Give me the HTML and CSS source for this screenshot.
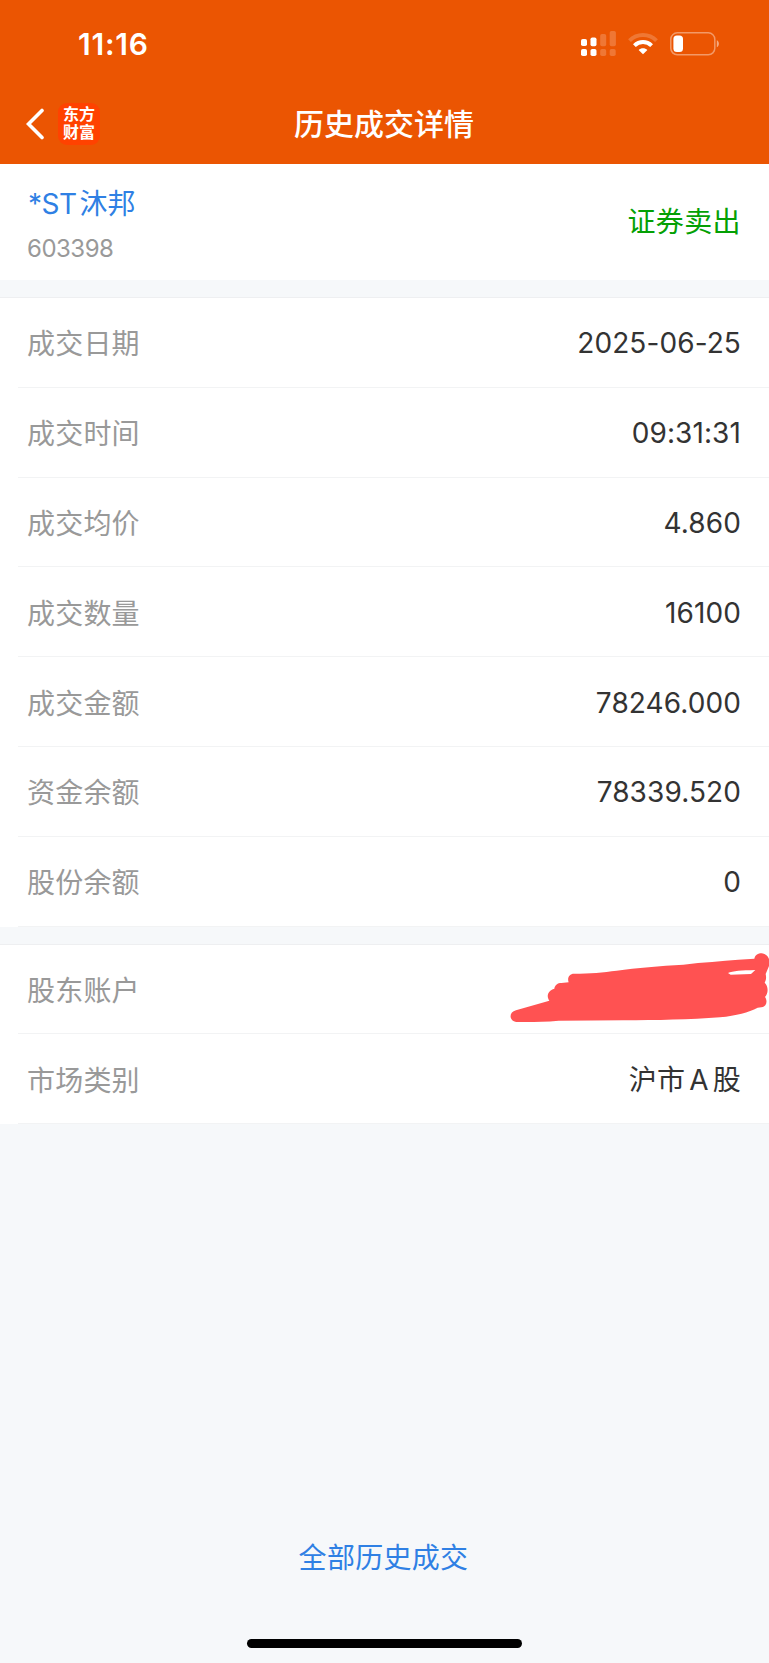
FILE: index.html
```
<!DOCTYPE html>
<html lang="zh-CN">
  <head>
    <meta charset="UTF-8" />
    <meta name="viewport" content="width=device-width, initial-scale=1.0" />
    <title>历史成交详情</title>
    <link rel="stylesheet" href="styles.css">
  </head>
  <body>
    <header class="header">
      <div class="status-bar">
        <span class="time">11:16</span>
        <div class="status-icons">
          <svg class="signal" viewBox="0 0 36 26" fill="#fff">
            <rect x="0" y="8" width="6" height="7" rx="1.8" />
            <rect x="9.5" y="6.5" width="6" height="8.7" rx="1.8" />
            <rect x="0" y="18" width="6" height="7" rx="1.8" />
            <rect x="9.5" y="18" width="6" height="7" rx="1.8" />
            <g opacity="0.2">
              <rect x="19.2" y="3" width="6" height="12.2" rx="1.8" />
              <rect x="28.7" y="0" width="6.2" height="15.2" rx="1.8" />
              <rect x="19.2" y="18" width="6" height="7" rx="1.8" />
              <rect x="28.7" y="18" width="6" height="7" rx="1.8" />
            </g>
          </svg>
          <svg class="wifi" viewBox="0 0 30 22" fill="none" stroke="#fff" stroke-width="4">
            <path d="M1.5 7.6C9 0.2 21 0.2 28.5 7.6" opacity="0.2" />
            <path d="M6.4 12.6C11.3 7.9 18.7 7.9 23.6 12.6" />
            <path d="M15 21.3L10.6 17C13 14.6 17 14.6 19.4 17Z" fill="#fff" stroke="none" />
          </svg>
          <svg class="battery" viewBox="0 0 50 24">
            <rect x="0.8" y="0.8" width="44" height="22" rx="6.5" fill="none" stroke="#fff" stroke-opacity="0.4" stroke-width="1.5" />
            <rect x="3.4" y="3.5" width="9.6" height="16.6" rx="3.5" fill="#fff" />
            <path d="M46.8 8.3C49.6 9.6 49.6 14 46.8 15.3Z" fill="#fff" fill-opacity="0.5" />
          </svg>
        </div>
      </div>
      <div class="nav-bar">
        <div class="nav-left">
          <svg class="back" viewBox="0 0 18 32">
            <path d="M16 2.5L2.5 16L16 29.5" fill="none" stroke="#fff" stroke-width="3.6" stroke-linecap="round" />
          </svg>
          <div class="logo">东方<br />财富</div>
        </div>
        <h1 class="title">历史成交详情</h1>
      </div>
    </header>

    <section class="summary">
      <div class="stock">
        <a class="stock-name" href="#"><span class="prefix">*ST</span>沐邦</a>
        <span class="stock-code">603398</span>
      </div>
      <span class="side">证券卖出</span>
    </section>

    <ul class="list">
      <li><span class="label">成交日期</span><span class="value">2025-06-25</span></li>
      <li><span class="label">成交时间</span><span class="value">09:31:31</span></li>
      <li><span class="label">成交均价</span><span class="value">4.860</span></li>
      <li><span class="label">成交数量</span><span class="value">16100</span></li>
      <li><span class="label">成交金额</span><span class="value">78246.000</span></li>
      <li><span class="label">资金余额</span><span class="value">78339.520</span></li>
      <li><span class="label">股份余额</span><span class="value">0</span></li>
    </ul>

    <ul class="list account">
      <li>
        <span class="label">股东账户</span>
        <svg class="scribble" viewBox="0 45 837 267">
          <path fill="#ff5252" fill-rule="evenodd" d="M78 241L178 212C168 198 174 181 193 176C195 165 203 159 214 159L236 157C231 143 238 131 252 131C300 131 340 127 380 122C440 113 510 108 580 104C640 96 695 94 745 89L793 86C796 74 804 70 815 70C827 71 833 78 837 87L837 108L827 132C829 142 829 150 824 158C835 168 836 190 825 201C834 214 829 231 814 232L803 233C775 247 740 257 690 262C600 269 500 271 400 271L206 272C160 276 120 277 80 276C56 273 56 246 78 241ZM714 129C728 123 755 121 796 120L783 132L722 134Z" />
        </svg>
      </li>
      <li><span class="label">市场类别</span><span class="value market">沪市<span class="latin">A</span>股</span></li>
    </ul>

    <footer class="footer">
      <a class="all-link" href="#">全部历史成交</a>
      <div class="home-indicator"></div>
    </footer>
  </body>
</html>
```
FILE: styles.css
```
* {
  margin: 0;
  padding: 0;
  box-sizing: border-box;
}

body {
  display: flex;
  flex-direction: column;
  min-height: 1663px;
  background-color: #f6f8fa;
  color: #333;
  font-family: "Inter", "Noto Sans CJK SC", sans-serif;
  font-size: 28px;
}

a {
  text-decoration: none;
  color: #2f80e4;
}

/* Header */
.header {
  height: 163.5px;
  background-color: #eb5502;
  color: #fff;
}

.status-bar {
  display: flex;
  justify-content: space-between;
  align-items: center;
  height: 88px;
  padding: 0 49px 0 78px;
}

.time {
  font-size: 30px;
  font-weight: 600;
  line-height: 36px;
  letter-spacing: 0.8px;
}

.status-icons {
  display: flex;
  align-items: center;
}

.signal {
  width: 36px;
  height: 26px;
  margin-right: 11px;
}

.wifi {
  width: 30px;
  height: 22px;
  margin-right: 12px;
}

.battery {
  width: 50px;
  height: 24px;
}

.nav-bar {
  display: grid;
  grid-template-columns: 1fr auto 1fr;
  align-items: center;
  height: 72px;
  padding: 0 27px 0 26px;
}

.nav-left {
  display: flex;
  align-items: center;
}

.back {
  width: 18px;
  height: 32px;
  margin-right: 14px;
}

.logo {
  width: 42px;
  height: 42px;
  padding-top: 2px;
  border-radius: 9px;
  background-color: #ff4200;
  font-size: 16px;
  font-weight: 700;
  line-height: 18px;
  text-align: center;
}

.title {
  font-size: 30px;
  font-weight: 500;
  line-height: 40px;
}

/* Stock summary */
.summary {
  display: flex;
  justify-content: space-between;
  align-items: center;
  height: 116.5px;
  padding: 0 28px;
  background-color: #fff;
}

.stock {
  display: flex;
  flex-direction: column;
  padding-top: 13px;
}

.stock-name {
  line-height: 42px;
}

.prefix {
  margin-right: 3px;
  letter-spacing: -0.5px;
}

.stock-code {
  margin-left: -1px;
  color: #999;
  font-size: 24px;
  line-height: 48px;
  letter-spacing: -0.5px;
}

.side {
  padding-bottom: 4px;
  color: #04a004;
  letter-spacing: 0.4px;
}

/* Detail rows */
.list {
  margin-top: 17px;
  border-top: 1px solid #eeeff1;
  background-color: #fff;
  list-style: none;
}

.list li {
  display: flex;
  justify-content: space-between;
  align-items: center;
  height: 89.8px;
  margin-left: 18px;
  padding: 0 28px 0 9px;
  border-bottom: 1px solid #f2f3f4;
}

.label {
  color: #999;
  letter-spacing: 0.2px;
}

.value {
  padding-top: 2px;
  letter-spacing: 0.1px;
}

.market {
  padding: 0 0 1px;
  letter-spacing: 0.2px;
}

.latin {
  margin: 0 4px;
}

.account li {
  position: relative;
}

/* Marker strokes over the account number */
.scribble {
  position: absolute;
  top: 0;
  right: 0;
  width: 279px;
  height: 89px;
}

/* Footer */
.footer {
  display: flex;
  flex-direction: column;
  align-items: center;
  margin-top: auto;
  padding-bottom: 15px;
}

.all-link {
  margin-right: 2px;
  line-height: 42px;
  letter-spacing: 0.3px;
}

.home-indicator {
  width: 275px;
  height: 9px;
  margin-top: 60px;
  border-radius: 5px;
  background-color: #000;
}
```
